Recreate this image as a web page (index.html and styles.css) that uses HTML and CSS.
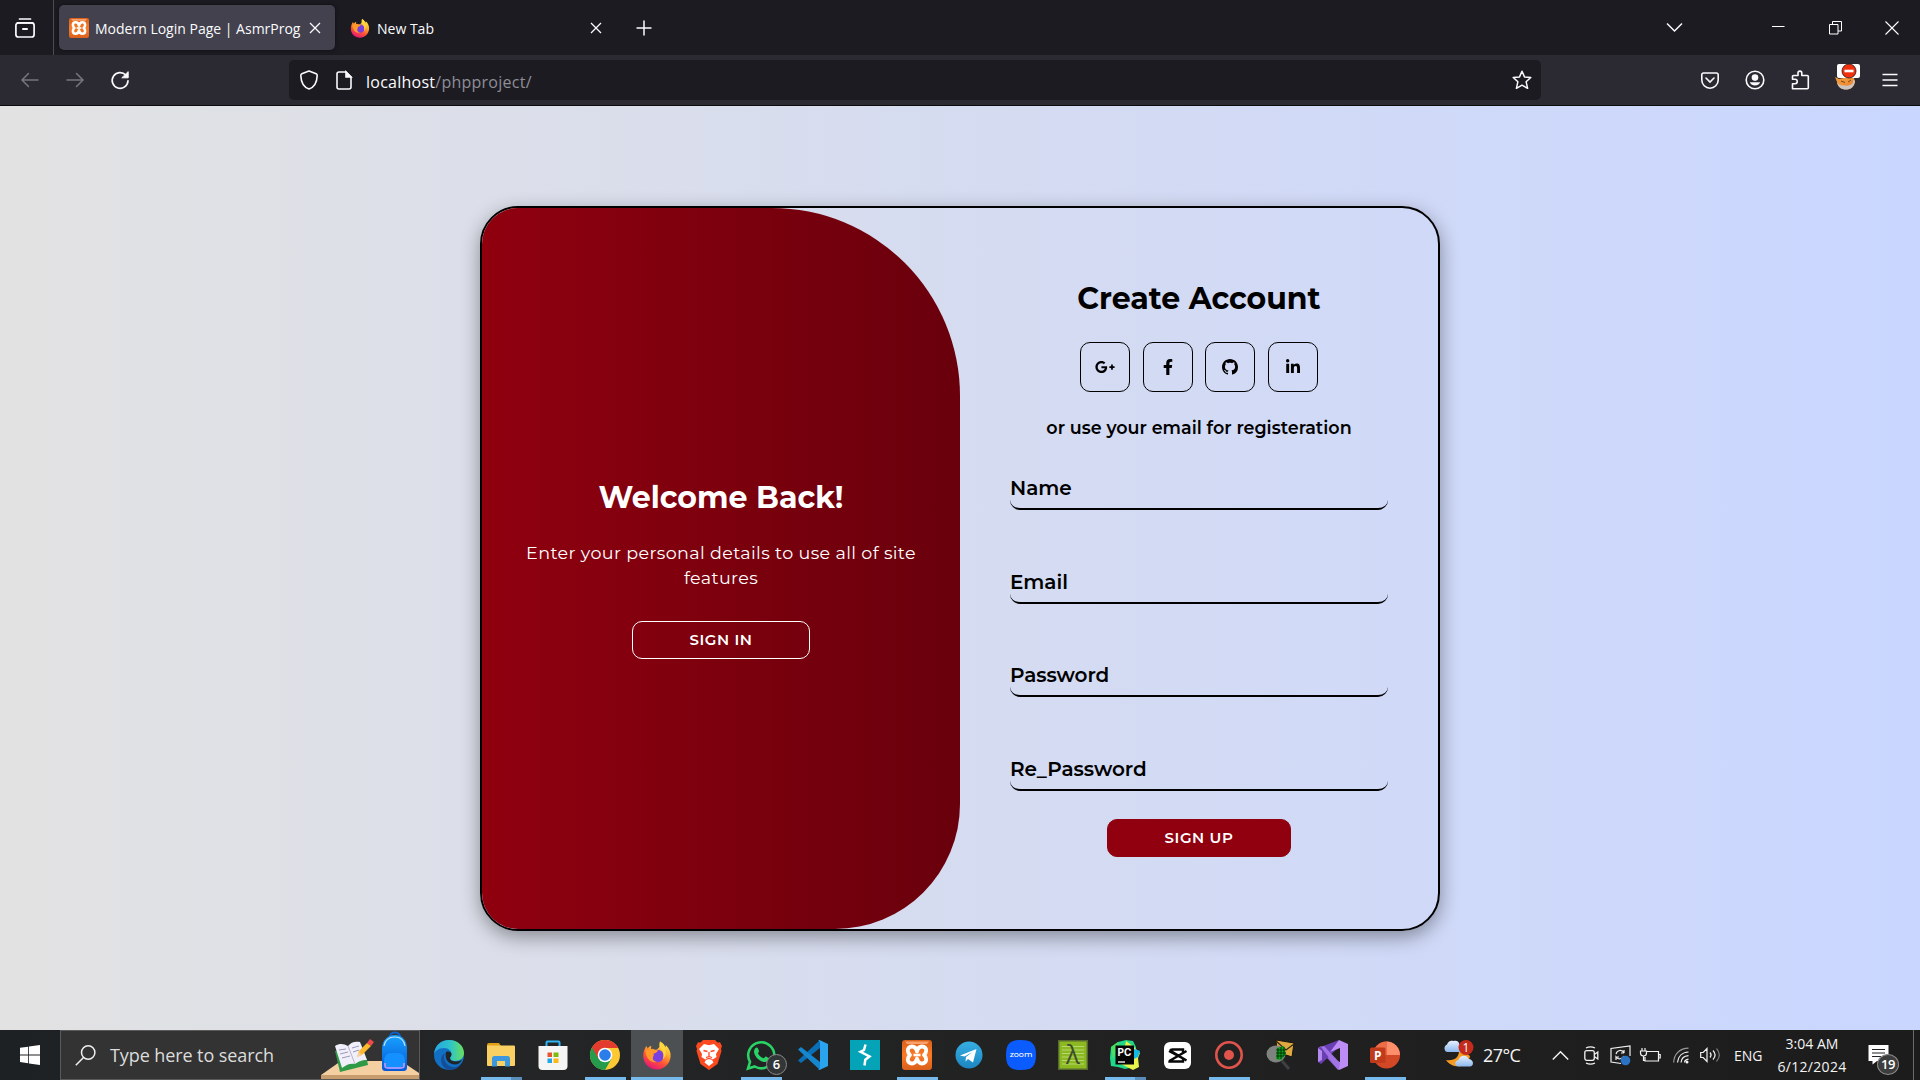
FILE: index.html
```html
<!DOCTYPE html>
<html lang="en">
<head>
<meta charset="utf-8">
<title>Modern Login Page | AsmrProg</title>
<link rel="stylesheet" href="styles.css">
</head>
<body>
<svg class="defs" width="0" height="0" aria-hidden="true">
  <defs>
    <linearGradient id="ffx" x1=".8" y1="0" x2=".3" y2="1"><stop offset="0" stop-color="#fff44f"/><stop offset=".35" stop-color="#ffb02e"/><stop offset=".65" stop-color="#ff5634"/><stop offset="1" stop-color="#e5127b"/></linearGradient>
    <linearGradient id="xam" x1="0" y1="0" x2="0" y2="1"><stop offset="0" stop-color="#d8601a"/><stop offset=".5" stop-color="#fb7a24"/><stop offset="1" stop-color="#d9601c"/></linearGradient>
    <linearGradient id="edgeTop" x1="0" y1="0" x2="1" y2="0"><stop offset="0" stop-color="#27a5e0"/><stop offset=".55" stop-color="#2fc4c9"/><stop offset="1" stop-color="#69e05a"/></linearGradient>
    <linearGradient id="tg" x1="0" y1="0" x2="0" y2="1"><stop offset="0" stop-color="#36aee2"/><stop offset="1" stop-color="#1c86c2"/></linearGradient>
    <linearGradient id="bag" x1="0" y1="0" x2="0" y2="1"><stop offset="0" stop-color="#18a2ff"/><stop offset="1" stop-color="#0558d8"/></linearGradient>
    <linearGradient id="cloud" x1="0" y1="0" x2="0" y2="1"><stop offset="0" stop-color="#e6f1ff"/><stop offset="1" stop-color="#8db8ee"/></linearGradient>
    <symbol id="firefox" viewBox="0 0 30 30">
      <path fill="url(#ffx)" d="M18 1.500c3 1.500 4.500 3.500 5.300 5.700.4-.7.500-1.400.400-2.200C27 8 29 12 28.600 16.500 28 24 22 29.500 15 29.500 7.500 29.500 1.300 23.800 1.300 16c0-4 1.200-7.500 3.200-10l1.200 2.500c1-1.400 2.200-2.200 3.500-2.700L9 9l5 1c2-1 4-3 3.500-5z"/>
      <circle cx="15.500" cy="16" r="6.200" fill="#7a3fe0"/>
      <path fill="#ff9a2a" d="M3.500 10l7-1.200c2 1.200 4 1 5.500 1.700-.5 2-3.500 2.500-4.500 3.500.5 1 .3 2-.5 3-1 3 2 5 4.500 4.800C9 24 3.500 18 3.500 10z"/>
      <path fill="#ffd83d" d="M18 1.500c3.500 2.500 5.600 6 5.800 10 .2 3-1 6-3 8 1-3 1-6-.500-9-1.800-3-3.500-4.500-2.300-9z"/>
    </symbol>
    <symbol id="xampp" viewBox="0 0 30 30">
      <rect width="30" height="30" rx="3" fill="url(#xam)"/>
      <path d="M3 1.500h24l-2 2.500H5z" fill="#f9a06b"/>
      <path d="M15 11.500C14 7.500 12 6.500 10 6.500c-3 0-4.200 2-4.200 4 0 2.200 1.200 3.500 2.200 4.500-1.200 1-2.200 2.300-2.200 4.500 0 2.300 1.700 4 4.200 4s4-1.500 5-5c1 3.500 2.500 5 5 5s4.200-1.700 4.200-4c0-2.200-1-3.500-2.200-4.500 1-1 2.200-2.300 2.200-4.500 0-2-1.200-4-4.200-4-2 0-4 1-5 5z" fill="none" stroke="#fff" stroke-width="3.800" stroke-linejoin="round"/>
      <path d="M11.500 15h7" stroke="#fff" stroke-width="2.600"/>
    </symbol>
  </defs>
</svg>

<header class="browser">
  <div class="tabbar">
    <div class="recent">
      <svg width="20" height="20" viewBox="0 0 20 20" fill="none" stroke="#fbfbfe" stroke-width="1.700" stroke-linecap="round"><path d="M4.500 1h11M2.500 4.800h15"/><rect x=".9" y="4.800" width="18.200" height="14.200" rx="2.500"/><path d="M8 11h4" stroke-width="2"/></svg>
    </div>
    <div class="tab tab-active">
      <svg class="favicon" width="20" height="20"><use href="#xampp"/></svg>
      <span class="tab-title">Modern Login Page | AsmrProg</span>
      <svg class="tab-close" width="12" height="12" viewBox="0 0 12 12" stroke="#fbfbfe" stroke-width="1.300"><path d="M1 1l10 10M11 1L1 11"/></svg>
    </div>
    <div class="tab">
      <svg class="favicon" width="20" height="20"><use href="#firefox"/></svg>
      <span class="tab-title tab-title-new">New Tab</span>
      <svg class="tab-close" width="12" height="12" viewBox="0 0 12 12" stroke="#fbfbfe" stroke-width="1.300"><path d="M1 1l10 10M11 1L1 11"/></svg>
    </div>
    <svg class="new-tab" width="16" height="16" viewBox="0 0 16 16" stroke="#fbfbfe" stroke-width="1.500"><path d="M8 .5v15M.5 8h15"/></svg>
    <div class="window-buttons">
      <svg class="tabs-list" width="17" height="11" viewBox="0 0 17 11" fill="none" stroke="#fbfbfe" stroke-width="1.500"><path d="M1 1.500l7.500 7.500L16 1.500"/></svg>
      <svg class="wb-min" width="13" height="14" viewBox="0 0 13 14" stroke="#fff"><path d="M0 5.500h12.500"/></svg>
      <svg class="wb-max" width="13" height="14" viewBox="0 0 13 14" fill="none" stroke="#fff"><path d="M.5 3.500h8.500v9.500H.5zM3.500 3.500v-3h9v9.500H9"/></svg>
      <svg width="14" height="14" viewBox="0 0 14 14" stroke="#fff" stroke-width="1.100"><path d="M.5.5l13 13M13.500.5l-13 13"/></svg>
    </div>
  </div>
  <div class="toolbar">
    <div class="nav">
      <svg width="18" height="16" viewBox="0 0 18 16" fill="none" stroke="#77767f" stroke-width="1.500" stroke-linecap="round"><path d="M17 8H1.500M7.500 1.500L1 8l6.500 6.500"/></svg>
      <svg width="18" height="16" viewBox="0 0 18 16" fill="none" stroke="#77767f" stroke-width="1.500" stroke-linecap="round"><path d="M1 8h15.500M10.500 1.500L17 8l-6.500 6.500"/></svg>
      <svg width="18" height="19" viewBox="0 0 18 19" fill="none" stroke="#fbfbfe" stroke-width="1.700" stroke-linecap="round"><path d="M14.800 4A7.900 7.900 0 1 0 17 9.800"/><path d="M17.200 1v5.800h-6z" fill="#fbfbfe" stroke-width="1"/></svg>
    </div>
    <div class="urlbar">
      <svg class="shield" width="18" height="20" viewBox="0 0 18 20" fill="none" stroke="#fbfbfe" stroke-width="1.600" stroke-linejoin="round"><path d="M9 1l7.200 2.800c.9.400 1 .9 1 1.700C17 11 15 17 9 19 3 17 1 11 .8 5.500c0-.8.200-1.400 1-1.700z"/></svg>
      <svg class="page-icon" width="16" height="19" viewBox="0 0 16 19" fill="none" stroke="#fbfbfe" stroke-width="1.600"><path d="M3 1h7l5 5v10a2 2 0 0 1-2 2H3a2 2 0 0 1-2-2V3a2 2 0 0 1 2-2z"/><path d="M10 1v5h5z" fill="#fbfbfe"/></svg>
      <span class="url"><span class="host">localhost</span><span class="path">/phpproject/</span></span>
      <svg class="star" width="20" height="20" viewBox="0 0 20 20" fill="none" stroke="#fbfbfe" stroke-width="1.500" stroke-linejoin="round"><path d="M10 1.200l2.500 5.700 6.300.6-4.700 4.200 1.500 6.600L10 15.200l-5.600 3.100 1.500-6.600L1.200 7.500l6.300-.6z"/></svg>
    </div>
    <div class="actions">
      <svg class="pocket" width="18" height="17" viewBox="0 0 18 17" fill="none" stroke="#fbfbfe" stroke-width="1.600" stroke-linecap="round"><path d="M2.500 1h13A1.700 1.700 0 0 1 17.200 2.700V8A8.200 8.200 0 0 1 .8 8V2.700A1.700 1.700 0 0 1 2.500 1z"/><path d="M5 6l4 4 4-4"/></svg>
      <svg class="account" width="20" height="20" viewBox="0 0 20 20" fill="none" stroke="#fbfbfe" stroke-width="1.600"><circle cx="10" cy="10" r="8.800"/><circle cx="10" cy="7.600" r="3.300" fill="#fbfbfe" stroke="none"/><path d="M4.800 12.300h10.400a5.800 5.800 0 0 1-10.400 0z" fill="#fbfbfe" stroke="none"/></svg>
      <svg class="puzzle" width="19" height="20" viewBox="0 0 19 20" fill="none" stroke="#fbfbfe" stroke-width="1.600" stroke-linejoin="round"><path d="M1.500 18.700v-5H4a1.800 1.800 0 0 0 0-4.500H1.500V6.500a1 1 0 0 1 1-1h4.500V3a1.900 1.900 0 0 1 3.800 0v2.500h5.500a1 1 0 0 1 1 1v11.200a1 1 0 0 1-1 1z"/></svg>
      <svg class="addon" width="26" height="26" viewBox="0 0 26 26"><path d="M0 13l4 2 14-3 2 5c0 5-4 8.500-9 8.500S2 22 2 18z" fill="#f2963a"/><path d="M2 18c2 4 8 6 16-2l2 1c-1 6-4 8.500-9 8.500s-8-2.500-9-7.500z" fill="#c9c4bf"/><path d="M4 16c3 5 9 5 14-1v4c-4 4-11 4-14-3z" fill="#ef8b32"/><path d="M6 17l4 1.500M13 18l3-2" stroke="#6b4523"/><rect x="2" y="0" width="23" height="14" rx="2" fill="#fff"/><circle cx="14" cy="7" r="7" fill="#f3300d" stroke="#201515" stroke-width=".8"/><path d="M9.500 7h9" stroke="#fff" stroke-width="2.600"/></svg>
      <svg class="menu" width="16" height="14" viewBox="0 0 16 14" stroke="#fbfbfe" stroke-width="1.500"><path d="M.5 1.500h15M.5 7h15M.5 12.500h15"/></svg>
    </div>
  </div>
</header>

<main class="page">
  <div class="card">
    <section class="welcome">
      <h1 class="title title-welcome">Welcome Back!</h1>
      <p class="lead">Enter your personal details to use all of site features</p>
      <button class="btn btn-outline">SIGN IN</button>
    </section>
    <form class="signup">
      <h1 class="title title-create">Create Account</h1>
      <div class="socials">
        <a class="social"><svg width="20" height="16" viewBox="0 0 640 512"><path d="M386.061 228.496c1.834 9.692 3.143 19.384 3.143 31.956C389.204 370.205 315.599 448 204.800 448c-106.084 0-192-85.915-192-192s85.916-192 192-192c51.864 0 95.083 18.859 128.611 50.292l-52.126 50.030c-14.145-13.621-39.028-29.599-76.485-29.599-65.484 0-118.920 54.221-118.920 121.277 0 67.056 53.436 121.277 118.920 121.277 75.961 0 104.513-54.745 108.965-82.773H204.800v-66.009h181.261zm185.406 6.437V179.200h-56.001v55.733h-55.733v56.001h55.733v55.733h56.001v-55.733H627.200v-56.001h-55.733z"/></svg></a>
        <a class="social"><svg width="10" height="16" viewBox="0 0 320 512"><path d="M279.140 288l14.220-92.660h-88.910v-60.130c0-25.350 12.420-50.060 52.240-50.060h40.420V6.260S260.430 0 225.360 0c-73.220 0-121.080 44.380-121.080 124.720v70.620H22.890V288h81.390v224h100.170V288z"/></svg></a>
        <a class="social"><svg width="16" height="16" viewBox="0 0 16 16"><path d="M8 0C3.580 0 0 3.580 0 8c0 3.540 2.290 6.530 5.470 7.590.4.070.55-.17.55-.38 0-.19-.01-.82-.01-1.490-2.010.37-2.530-.49-2.690-.94-.09-.23-.48-.94-.82-1.130-.28-.15-.68-.52-.01-.53.63-.01 1.080.58 1.230.82.72 1.210 1.870.87 2.330.66.070-.52.280-.87.510-1.070-1.780-.2-3.640-.89-3.640-3.950 0-.87.310-1.590.820-2.150-.08-.2-.36-1.020.080-2.120 0 0 .670-.21 2.200.820.640-.18 1.320-.27 2-.27.680 0 1.360.090 2 .270 1.530-1.040 2.200-.82 2.200-.82.440 1.100.160 1.920.080 2.120.510.560.820 1.270.820 2.150 0 3.070-1.870 3.750-3.650 3.950.290.250.540.730.540 1.480 0 1.070-.01 1.930-.01 2.200 0 .210.150.460.550.380A8.013 8.013 0 0 0 16 8c0-4.420-3.580-8-8-8z"/></svg></a>
        <a class="social"><svg width="14" height="16" viewBox="0 0 448 512"><path d="M100.280 448H7.400V148.900h92.880zM53.790 108.100C24.090 108.100 0 83.500 0 53.800a53.790 53.790 0 0 1 107.580 0c0 29.700-24.100 54.300-53.790 54.300zM447.900 448h-92.680V302.400c0-34.700-.7-79.200-48.290-79.200-48.290 0-55.690 37.700-55.690 76.700V448h-92.780V148.900h89.080v40.800h1.300c12.400-23.500 42.690-48.300 87.880-48.300 94 0 111.280 61.900 111.280 142.300V448z"/></svg></a>
      </div>
      <span class="hint">or use your email for registeration</span>
      <div class="fields">
        <label class="field">Name</label>
        <label class="field">Email</label>
        <label class="field">Password</label>
        <label class="field">Re_Password</label>
      </div>
      <button class="btn btn-solid">SIGN UP</button>
    </form>
  </div>
</main>

<footer class="taskbar">
  <div class="start"><svg width="20" height="20" viewBox="0 0 20 20" fill="#fff"><path d="M0 2.800l8.200-1.100v7.800H0zM9 1.600L20 0v9.500H9zM0 10.400h8.200v7.800L0 17.100zM9 10.400h11V20L9 18.400z"/></svg></div>
  <div class="search">
    <svg width="21" height="21" viewBox="0 0 21 21" fill="none" stroke="#f0f0f0" stroke-width="1.500"><circle cx="13.200" cy="7.500" r="6.700"/><path d="M8.500 12.500L.8 20.200"/></svg>
    <span class="search-text">Type here to search</span>
    <svg class="search-art" width="98" height="48" viewBox="0 0 98 48">
      <path d="M0 44l20-14h60l18 12v2z" fill="#f3cfa2"/><path d="M0 44h98v4H0z" fill="#c79d6e"/>
      <path d="M14 20l5 21 28-7-1-5-6-16z" fill="#2f9a46"/><path d="M14 15c5-3 9-2 13 0 3-4 7-5 12-4l7 18c-6 0-9 2-12 4-4-1-8 0-13 4z" fill="#f1effa"/>
      <path d="M27 15l7 18" stroke="#b9b2cf"/><path d="M18 19l7-1M19 23l8-2M21 27l8-2M31 17l7-2M32 21l6-2" stroke="#9a98b8"/>
      <path d="M36 26l2-6 8-8 4 3-9 9z" fill="#ffb92e"/><path d="M46 12l3-4 4 3-3 4z" fill="#ef4b4b"/><path d="M36 26l2-5 3 3z" fill="#f3d2a5"/>
      <path d="M69 6c0-6 10-6 10 0" fill="none" stroke="#0c62c9" stroke-width="2"/>
      <path d="M61 18c0-9 6-14 13-14s12 5 12 14v18c0 3-1 4-4 4H65c-3 0-4-1-4-4z" fill="url(#bag)"/>
      <path d="M63 15c1-6 5-9 11-9s9 3 10 9" fill="none" stroke="#b8e2ff" stroke-width="1.200"/>
      <rect x="63" y="22" width="21" height="16" rx="7" fill="#1590ff"/><path d="M64 32v3c0 2 1 2 3 2h13c2 0 3 0 3-2v-3" fill="none" stroke="#c79bff" stroke-width="1.600"/>
    </svg>
  </div>
  <div class="apps">
    <div class="app"><svg width="30" height="30" viewBox="0 0 30 30"><circle cx="15" cy="15" r="15" fill="#1270c4"/><path d="M0 14C1 5 7 0 15 0c9 0 15 6 15 13 0 5-4 8-9 8-3 0-5-1-5-3 0-1 1.500-2 1.500-4 0-3-3-6-7.500-6C5 8 1 11 0 14z" fill="url(#edgeTop)"/><path d="M11 13c-2 3-1 9 3 12 4 3 9 3 13-1-3 5-8 6-12 6C10 29 7 24 7 20c0-4 2-6 4-7z" fill="#144e97"/><path d="M12 12c3-1 5.500 0 5.500 2.500 0 1.500-1.500 2.500-1.500 3.500 0 2 2 3.500 6 3.500 3 0 5-1 6-2-1 3-4 5-7 5-6 0-11-5-9-12.500z" fill="#202426"/></svg></div>
    <div class="app app-open app-stack"><svg width="28" height="26" viewBox="0 0 28 26"><path d="M0 3a2 2 0 0 1 2-2h10l2 3v5H0z" fill="#e0a118"/><rect y="3.500" width="28" height="20.500" rx="1" fill="#fbd063"/><path d="M5 24.500v-8a2.500 2.500 0 0 1 2.500-2.500h13a2.500 2.500 0 0 1 2.500 2.500v8h-5V19h-8v5.500z" fill="#3d97de"/></svg></div>
    <div class="app"><svg width="30" height="30" viewBox="0 0 30 30"><path d="M8.500 7V2.500c0-.6.400-1 1-1h11c.6 0 1 .4 1 1V7" fill="none" stroke="#2fb6f2" stroke-width="2"/><path d="M.5 6h29v20a4 4 0 0 1-4 4h-21a4 4 0 0 1-4-4z" fill="#f5f5f6"/><path fill="#e8542f" d="M9.500 12.500H14V17H9.500z"/><path fill="#80bb0a" d="M15.500 12.500h5V17h-5z"/><path fill="#1fa5ea" d="M9.500 18.500H14V23H9.500z"/><path fill="#fdb913" d="M15.500 18.500h5V23h-5z"/></svg></div>
    <div class="app app-open"><svg width="30" height="30" viewBox="0 0 30 30"><circle cx="15" cy="15" r="15" fill="#fcc934"/><path d="M15 15L2 7.500A15 15 0 0 0 15 30l6.500-11.200z" fill="#249c4c"/><path d="M15 15V8h13.200A15 15 0 0 0 2 7.500l6.500 11.200z" fill="#e33b2e"/><circle cx="15" cy="15" r="7.300" fill="#fff"/><circle cx="15" cy="15" r="5.800" fill="#2b7de9"/></svg></div>
    <div class="app app-open app-current"><svg width="30" height="30"><use href="#firefox"/></svg></div>
    <div class="app"><svg width="26" height="30" viewBox="0 0 26 30"><path d="M7 0h12l2.500 2.500L24 2.200 26 6l-1 3 .5 2-4 13L13 30 4.500 24 .5 11 1 9 0 6l2-3.800 2.500.3z" fill="#fb4a20"/><path d="M8 4l5 1.300L18 4l5 5-3 5 .5 3-4.500 3 1.500 2.500L13 26l-4.500-3.500L10 20l-4.500-3L6 14 3 9z" fill="#fff"/><path d="M7.500 10.500l4 1M18.500 10.500l-4 1M13 12v4.500l-3 1M13 16.500l3 1M9.500 19.500l3.500-1 3.500 1" stroke="#fb4a20" stroke-width="1.300" fill="none"/></svg></div>
    <div class="app app-open"><svg width="30" height="30" viewBox="0 0 30 30"><path d="M2 28.500l2-6.700a13 13 0 1 1 4.700 4.700z" fill="none" stroke="#29d366" stroke-width="2.600"/><path d="M9 8.500c1-1.500 2.500-1.500 3 0l1 2.500c.3 1-1.500 2-1 2.500 1.500 2.500 3 3.800 5.500 4.700.8 0 1.700-2.200 2.500-1.700l2.700 1.400c1 .5-.2 4.100-3.700 4.100C13 22 8 15.500 8 11.500c0-1 .3-2.200 1-3z" fill="#29d366"/></svg><span class="badge">6</span></div>
    <div class="app"><svg width="30" height="30" viewBox="0 0 30 30"><path d="M22 0v8L3 23 0 20.500z" fill="#0b6fb8"/><path d="M22 30v-8L3 7 0 9.500z" fill="#1687cf"/><path d="M21.500 0L30 4v22l-8.500 4-1.500-1c1 .3 2-.3 2-1.500v-25C22 1.300 21 .7 20 1z" fill="#2aa4ef"/></svg></div>
    <div class="app"><svg width="30" height="30" viewBox="0 0 30 30"><path fill="#04a3b8" d="M0 0h30v30H0z"/><path d="M15.500 4.500L14 10l-3.500 1.800 9 4.700-4.200 3.200-.8 5.800" fill="none" stroke="#fff" stroke-width="2.500"/></svg></div>
    <div class="app app-open"><svg width="30" height="30"><use href="#xampp"/></svg></div>
    <div class="app"><svg width="28" height="28" viewBox="0 0 28 28"><circle cx="14" cy="14" r="13.500" fill="url(#tg)"/><path d="M5 14.500L21.500 8 18 21.500l-5-3.500-2.500 2.500.5-4.500 6.500-5-8 4.500z" fill="#fff"/></svg></div>
    <div class="app"><svg width="30" height="30" viewBox="0 0 30 30"><path d="M15 0c11 0 15 4 15 15s-4 15-15 15S0 26 0 15 4 0 15 0z" fill="#0b5cff"/><text x="15" y="17.200" class="t-zoom">zoom</text></svg></div>
    <div class="app"><svg width="30" height="30" viewBox="0 0 30 30"><path fill="#8cb921" stroke="#56682f" stroke-width="1.500" d="M.7.7h28.600v28.600H.7z"/><path d="M4 6.500h22M4 10h22M4 13.500h22M4 17h22M4 20.500h22M4 24h22" stroke="#b6d873"/><text x="15" y="24" class="t-lambda">λ</text></svg></div>
    <div class="app app-open app-stack"><svg width="30" height="30" viewBox="0 0 30 30"><path d="M1 7l7-5 8-2 7 1 3 6-2 20-9 2-7-2-7-1L0 18z" fill="#21d789"/><path d="M16 1l8 6 6 6-2 5 1 9-6 3-12-6z" fill="#e8f34c"/><path d="M22 8l8 3-2 6-6 3z" fill="#11b9e5"/><path d="M1 7l7-5 2 5-7 12z" fill="#49df62"/><path fill="#060606" d="M5.500 5.500h18.500v19H5.500z"/><path d="M8 22h7" stroke="#fff" stroke-width="1.300"/><text x="14.500" y="15.500" class="t-pc">PC</text></svg></div>
    <div class="app"><svg width="27" height="27" viewBox="0 0 27 27"><rect width="27" height="27" rx="6" fill="#fff"/><path d="M22.500 9L8 17.500c-1 .8-2.500.8-2.500 2h13.500v-3L5 9M22.500 18.500L8.500 10C6 8.500 6 7.500 8.500 7.500h10.500v3.500" fill="none" stroke="#080808" stroke-width="2.400"/></svg></div>
    <div class="app app-open"><svg width="28" height="28" viewBox="0 0 28 28"><circle cx="14" cy="14" r="12.700" fill="none" stroke="#e1544c" stroke-width="2.600"/><circle cx="14" cy="14" r="5" fill="#e1544c"/></svg></div>
    <div class="app"><svg width="30" height="30" viewBox="0 0 30 30"><path d="M10 0l18 3-2 14-15-5z" fill="#dfa941" stroke="#19150c"/><path d="M10 1l10 9 8-6" fill="none" stroke="#352914" stroke-width="1.300"/><path d="M16 21l7 8" stroke="#3d4143" stroke-width="3"/><ellipse cx="10" cy="14" rx="9.500" ry="8.500" fill="#7e837f"/><path d="M11 8l7-2 2 8-5 6-5-1z" fill="#0aa31c"/><path d="M12 8v11M15 7v12M18 7v9M10 10h9M10 13h10M10 16h8" stroke="#041f08" stroke-width=".8"/></svg></div>
    <div class="app"><svg width="30" height="30" viewBox="0 0 30 30"><path d="M0 8l3-2 19 18-2 6z" fill="#9263da"/><path d="M0 8v14l3 2L21 7V0z" fill="#6b3fb4"/><path d="M0 8l4 3v9l-4 2z" fill="#b389ec"/><path d="M21 0l9 4v22l-9 4-9-11 10 3V8l-10 4z" fill="#bd8cf5"/><path d="M12 19L3 7l3-1 16 17-1 7z" fill="#a373e6"/></svg></div>
    <div class="app app-open"><svg width="30" height="28" viewBox="0 0 30 28"><circle cx="16.500" cy="14" r="13.500" fill="#d24726"/><path d="M16.500.5A13.500 13.500 0 0 1 30 14H16.500z" fill="#ff8f6b"/><path d="M16.500.5A13.500 13.500 0 0 0 3 14h13.500z" fill="#ee6c47"/><rect y="6.500" width="15.500" height="15.500" rx="1.500" fill="#c03a1c"/><text x="7.700" y="18.500" class="t-ppt">P</text></svg></div>
  </div>
  <div class="weather">
    <svg width="31" height="30" viewBox="0 0 31 30"><path d="M16 8c1 10-5 13-13 12 6 9 22 9 24-4z" fill="#f69a22"/><path d="M4 12a4 4 0 0 1 0-7.500C5 1 8 0 10.500 1 14 0 16 2 16.500 4.500c4 0 5 6 1 7.500z" fill="url(#cloud)"/><path d="M16 26.500c-5 0-5-6-.5-6.500 1-5 8.500-6 10-1 5 0 6.500 7.500 1 7.500z" fill="url(#cloud)"/><circle cx="23" cy="7.500" r="7.500" fill="#c42b1c"/><text x="23" y="12" class="t-alert">1</text></svg>
    <span class="temp">27°C</span>
  </div>
  <div class="tray">
    <svg class="tr-up" width="17" height="11" viewBox="0 0 17 11" fill="none" stroke="#f2f2f2" stroke-width="1.500"><path d="M.8 9.500l7.700-7.700 7.700 7.700"/></svg>
    <svg class="tr-meet" width="15" height="19" viewBox="0 0 15 19" fill="none" stroke="#f2f2f2" stroke-width="1.300"><rect x=".8" y="4.700" width="9.500" height="9.600" rx="2"/><path d="M10.300 8.500l3.500-2.500v7l-3.500-2.500M2 2c3-1.500 6-1.500 9 0M2 17c3 1.500 6 1.500 9 0"/></svg>
    <svg class="tr-upd" width="21" height="21" viewBox="0 0 21 21" fill="none" stroke="#f2f2f2" stroke-width="1.200"><path d="M11 18.500L1 17V3.500L20 1v10M6 9c1-4 6-5 8-1V5M14 8h-3M14 11c-1 3-6 4-8 1v3M6 12h3"/><circle cx="15.500" cy="15.500" r="4.800" fill="#2b73c4" stroke="none"/></svg>
    <svg class="tr-bat" width="21" height="15" viewBox="0 0 21 15" fill="none" stroke="#f2f2f2" stroke-width="1.200"><path d="M7 3.500h11.500v9.500H5V9M18.500 6.500h1.700v3.500h-1.700M2 0v3M5 0v3M.5 3h6v2a3 3 0 0 1-6 0zM3.500 8v4.500H5"/></svg>
    <svg class="tr-wifi" width="16" height="17" viewBox="0 0 16 17" fill="none" stroke="#f2f2f2" stroke-width="1.200"><path d="M.7 15.500C1 7 7 1.200 15.500 1.200" stroke="#999"/><path d="M4.500 15.500C5 9.500 9 5.300 15.500 5M8 15.500c.4-4 3-6.500 7.500-6.800M11.500 15.500c.2-2 1.500-3 4-3.300"/><circle cx="14" cy="15" r="1.500" fill="#f2f2f2" stroke="none"/></svg>
    <svg class="tr-vol" width="21" height="16" viewBox="0 0 21 16" fill="none" stroke="#f2f2f2" stroke-width="1.200"><path d="M.7 5.500h2.500L7 1.500v13l-3.800-4H.7zM10 5.500c1.300 1.500 1.300 3.500 0 5M13 3.500c2.500 2.700 2.500 6.300 0 9"/><path d="M16.500 1.500c3.500 4 3.500 9 0 13" stroke="#777"/></svg>
    <span class="lang">ENG</span>
    <div class="clock"><span class="time">3:04 AM</span><span class="date">6/12/2024</span></div>
    <div class="notify"><svg width="21" height="20" viewBox="0 0 21 20"><path d="M.5 0h20v16H9l-4.500 3.500V16h-4z" fill="#fff"/><path d="M4 4.500h13M4 8h13M4 11.500h9" stroke="#222" stroke-width="1.200"/></svg><span class="badge badge-notify">19</span></div>
  </div>
</footer>
</body>
</html>
```
FILE: styles.css
```css
* { box-sizing: border-box; margin: 0; padding: 0; }
body {
  width: 1920px;
  height: 1080px;
  overflow: hidden;
  display: flex;
  flex-direction: column;
  font-family: "Open Sans", "Noto Sans", sans-serif;
}
svg { display: block; flex: none; overflow: visible; }
.defs { position: absolute; }

/* Browser chrome */
.browser { height: 106px; background: #2b2a33; border-bottom: 1px solid #0c0c0d; flex: none; }
.tabbar { height: 55px; background: #1c1b22; display: flex; align-items: center; color: #fbfbfe; }
.recent { width: 54px; height: 55px; padding-left: 15px; border-right: 1px solid #4c4b54; display: flex; align-items: center; margin-right: 5px; }
.tab { width: 276px; height: 45px; padding: 0 14px 0 10px; border-radius: 5px; display: flex; align-items: center; margin-right: 5px; }
.tab-active { background: #42414d; box-shadow: 0 0 4px rgba(0, 0, 0, .5); }
.tab-title { margin-left: 6px; padding-top: 2px; font-size: 14px; line-height: 20px; white-space: nowrap; flex: 1; }
.tab-title-new { margin-left: 7px; }
.new-tab { margin-left: 15px; }
.window-buttons { margin-left: auto; display: flex; align-items: center; padding-right: 21px; }
.tabs-list { margin-right: 89px; }
.wb-min { margin-right: 44px; }
.wb-max { margin-right: 43px; }
.toolbar { height: 50px; display: flex; align-items: center; }
.nav { width: 289px; padding-left: 21px; display: flex; gap: 27px; align-items: center; }
.urlbar { width: 1252px; height: 40px; border-radius: 5px; background: #1c1b22; display: flex; align-items: center; padding: 0 9px 0 11px; }
.page-icon { margin-left: 18px; }
.url { margin-left: 14px; font-size: 16px; line-height: 24px; letter-spacing: .25px; padding-top: 3px; }
.host { color: #fbfbfe; }
.path { color: #8f8e97; }
.star { margin-left: auto; }
.actions { flex: 1; display: flex; align-items: center; padding-left: 160px; }
.account { margin-left: 26px; }
.puzzle { margin-left: 26px; }
.addon { margin: -6px 0 0 25px; }
.menu { margin-left: 21px; }

/* Login page */
.page {
  height: 924px;
  flex: none;
  background: linear-gradient(to right, #e2e2e2, #c9d6ff);
  display: flex;
  align-items: center;
  justify-content: center;
  font-family: Montserrat, Inter, "Open Sans", sans-serif;
}
.card {
  width: 960px;
  height: 725px;
  display: flex;
  border: 2px solid #000;
  border-radius: 38px;
  overflow: hidden;
  box-shadow: 0 6px 19px rgba(0, 0, 0, .38);
}
.welcome, .signup { width: 478px; display: flex; flex-direction: column; align-items: center; justify-content: center; }
.welcome {
  padding: 0 35px;
  color: #fff;
  text-align: center;
  background: linear-gradient(to right, #90000f, #69000c);
  border-radius: 0 188px 125px 0;
}
.signup { padding: 0 50px; color: #000; }
.title { font-size: 30px; line-height: 37px; font-weight: 700; white-space: nowrap; }
.title-welcome { padding-top: 1px; }
.title-create { padding-top: 1px; }
.lead { margin-top: 24px; font-size: 17.5px; line-height: 25px; letter-spacing: .375px; }
.btn { height: 38px; border-radius: 10px; font: 600 15px/36px Montserrat, Inter, sans-serif; letter-spacing: .6px; color: #fff; }
.btn-outline { width: 178px; margin-top: 31px; border: 1px solid #fff; background: transparent; }
.btn-solid { width: 184px; margin-top: 28px; border: 1px solid #90000f; background: #90000f; }
.socials { margin-top: 25px; display: flex; gap: 12.6px; }
.social { width: 50px; height: 50px; border: 1px solid #000; border-radius: 10px; display: flex; align-items: center; justify-content: center; }
.hint { margin-top: 25px; font-size: 17.5px; line-height: 22px; font-weight: 600; white-space: nowrap; }
.fields { width: 100%; margin-top: 37px; display: flex; flex-direction: column; gap: 59.75px; }
.field { height: 34px; border-bottom: 2px solid #000; border-radius: 10px; font-size: 20px; line-height: 24px; font-weight: 600; letter-spacing: -.05px; }

/* Windows taskbar */
.taskbar { height: 50px; flex: none; display: flex; background: linear-gradient(to right, #1d2124, #232526 25%, #212121 60%, #1c1c1c); color: #f4f4f4; }
.start { width: 60px; display: flex; align-items: center; justify-content: center; }
.search { width: 360px; height: 50px; background: #333; border: 1px solid #5a5a5a; display: flex; align-items: center; padding-left: 14px; }
.search-text { margin-left: 14px; font-size: 18px; line-height: 26px; letter-spacing: -.09px; color: #dcdcdc; white-space: nowrap; }
.search-art { margin-left: auto; }
.apps { margin-left: 3px; display: flex; }
.app { width: 52px; height: 50px; display: flex; align-items: center; justify-content: center; position: relative; }
.app-open::after { content: ""; position: absolute; left: 6px; bottom: 0; width: 41px; height: 3px; background: #76b9ed; }
.app-stack::after { background: linear-gradient(to right, #76b9ed 30px, #5a8dba 30px); }
.app-current { background: #4d5052; }
.app-current::after { left: 0; width: 52px; }
.badge { position: absolute; left: 31px; top: 24px; width: 21px; height: 21px; border-radius: 50%; background: #333637; border: 1px solid #8b8b8b; font: 600 13px/19px "Open Sans", sans-serif; text-align: center; color: #fff; }
.t-zoom { font: 500 8px Montserrat, Inter, sans-serif; fill: #fff; text-anchor: middle; }
.t-lambda { font: 26px "Open Sans", sans-serif; fill: #3f4d2b; text-anchor: middle; }
.t-pc { font: 700 10px Inter, sans-serif; fill: #fff; text-anchor: middle; }
.t-ppt { font: 700 12px "Open Sans", sans-serif; fill: #fff; text-anchor: middle; }
.t-alert { font: 12px "Open Sans", sans-serif; fill: #fff; text-anchor: middle; }
.weather { margin-left: 32px; display: flex; align-items: center; }
.temp { margin-left: 9px; width: 38px; font-size: 18px; line-height: 26px; letter-spacing: -.6px; white-space: nowrap; }
.tray { flex: 1; margin-left: 31px; display: flex; align-items: center; }
.tr-meet { margin-left: 15px; }
.tr-upd { margin-left: 11px; }
.tr-bat { margin-left: 9px; }
.tr-wifi { margin-left: 12px; }
.tr-vol { margin-left: 11px; }
.lang { margin-left: 13px; width: 28px; font-size: 14px; }
.clock { margin-left: 14px; width: 72px; display: flex; flex-direction: column; align-items: center; font-size: 14px; line-height: 23px; white-space: nowrap; }
.date { letter-spacing: .3px; }
.notify { position: relative; margin-left: 20px; width: 46px; height: 50px; padding-top: 15px; border-right: 1px solid #6a6a6a; }
.badge-notify { left: 9px; width: 22px; background: #3d3d3d; letter-spacing: -.5px; }
```
